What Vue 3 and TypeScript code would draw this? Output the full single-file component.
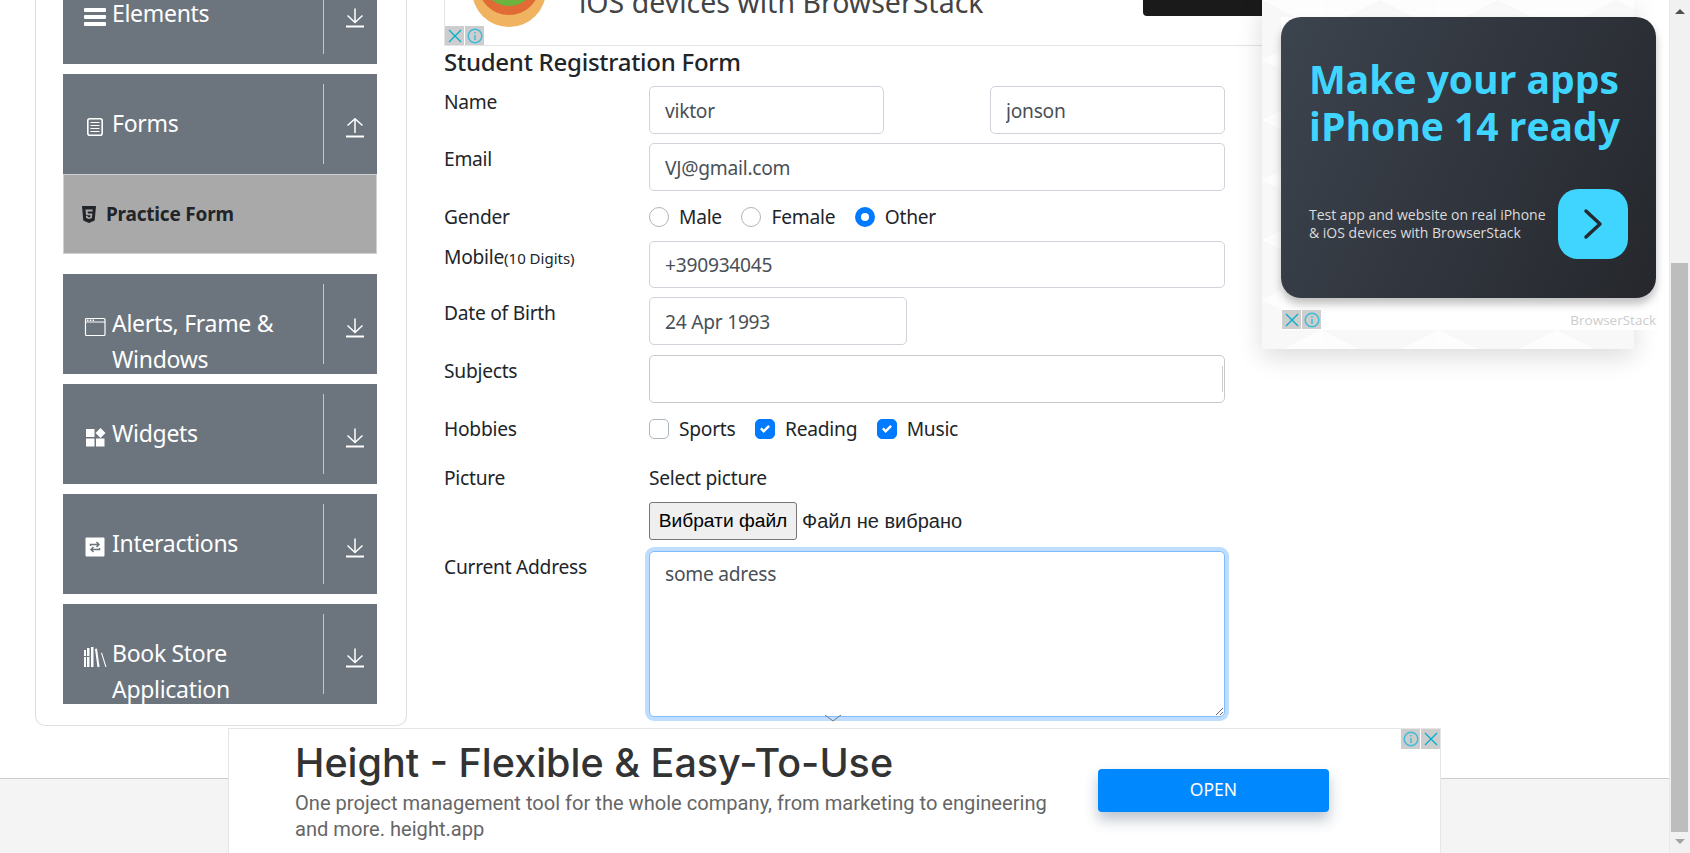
<script setup lang="ts">
interface MenuGroup {
  label: string
  icon: string
  open?: boolean
}

const groups: MenuGroup[] = [
  { label: 'Elements', icon: 'bars' },
  { label: 'Forms', icon: 'doc', open: true },
  { label: 'Alerts, Frame & Windows', icon: 'window' },
  { label: 'Widgets', icon: 'widgets' },
  { label: 'Interactions', icon: 'swap' },
  { label: 'Book Store Application', icon: 'books' }
]

const genders = [
  { label: 'Male', checked: false },
  { label: 'Female', checked: false },
  { label: 'Other', checked: true }
]

const hobbies = [
  { label: 'Sports', checked: false },
  { label: 'Reading', checked: true },
  { label: 'Music', checked: true }
]
</script>

<template>
  <div class="page">
    <div class="content">
      <div class="main">
        <aside class="side-card">
          <div class="menu">
            <template v-for="g in groups" :key="g.label">
              <div class="group-header">
                <div class="group-title">
                  <span class="group-icon">
                    <svg v-if="g.icon === 'bars'" width="24" height="20" viewBox="0 0 24 20" fill="#fff"><rect x="1" y="1" width="22" height="4" rx="1" /><rect x="1" y="8" width="22" height="4" rx="1" /><rect x="1" y="15" width="22" height="4" rx="1" /></svg>
                    <svg v-else-if="g.icon === 'doc'" width="24" height="20" viewBox="0 0 24 20" fill="none" stroke="#fff"><rect x="4.800" y="1.800" width="14.400" height="16.400" rx="2" stroke-width="1.600" /><path d="M7.500 5.500h9M7.500 8.500h9M7.500 11.500h9M7.500 14.500h9" /></svg>
                    <svg v-else-if="g.icon === 'window'" width="24" height="20" viewBox="0 0 24 20" fill="none" stroke="#fff"><rect x="2.500" y="1.500" width="19.500" height="17" rx="1" stroke-width="1.200" /><path d="M2.500 5h19.500" /><path d="M4 3.200h1.500M6.800 3.200h1.500M9.600 3.200h1.500" stroke-width="1.400" /></svg>
                    <svg v-else-if="g.icon === 'widgets'" width="24" height="20" viewBox="0 0 24 20" fill="#fff"><rect x="3" y="2" width="8.500" height="8" /><rect x="3" y="11.500" width="8.500" height="8" /><rect x="13" y="11.500" width="8.500" height="8" /><path d="M17.500 1l5 5-5 5-5-5z" /></svg>
                    <svg v-else-if="g.icon === 'swap'" width="24" height="20" viewBox="0 0 24 20"><rect x="2.500" y="0.500" width="19" height="19" rx="1" fill="#fff" /><path d="M7.500 9V7.500h8M13.500 5l2.500 2.500-2.500 2.500M16.500 11v1.500h-8M10.500 15L8 12.500 10.500 10" fill="none" stroke="#6c757d" stroke-width="1.500" /></svg>
                    <svg v-else width="24" height="20" viewBox="0 0 24 20" fill="#fff"><rect x="1" y="3" width="2" height="17" /><rect x="4" y="1" width="2.500" height="19" /><rect x="8" y="0" width="2.500" height="20" /><path d="M12 2l2-.4 2.500 18.400-2 .4z" /><path d="M18 6l1-.4 4.500 14.400-1 .4z" /><rect x="1" y="9" width="5.500" height="1" fill="#6c757d" /></svg>
                  </span>
                  <span class="group-label">{{ g.label }}</span>
                </div>
                <div class="group-toggle">
                  <svg width="20" height="20" viewBox="0 0 20 20" fill="none" stroke="#fff" stroke-width="1.500">
                    <path v-if="g.open" d="M10 15V1M2.500 7.500L10 .8l7.500 6.700" />
                    <path v-else d="M10 .5v14M2.500 7.500L10 14.500l7.500-7" />
                    <path d="M1 18.500h18" stroke-width="2" />
                  </svg>
                </div>
              </div>
              <div v-if="g.open" class="sub-item">
                <svg width="16" height="17" viewBox="0 0 16 17" fill="#212529"><path d="M1 0h14l-1.300 14.500L8 17l-5.700-2.500z" /><path d="M4.500 3.500h7.200l-.2 2H6.700l.1 2h4.500l-.4 4.500L8 13l-2.900-1-.2-2h1.800l.1 .9 1.200 .4 1.300-.4 .1-1.700H5z" fill="#a9a9a9" /></svg>
                <span>Practice Form</span>
              </div>
            </template>
          </div>
        </aside>

        <section class="form-col">
          <div class="top-ad">
            <svg class="top-logo" width="76" height="40" viewBox="0 0 76 40">
              <circle cx="38" cy="2" r="37" fill="#f0b35f" />
              <circle cx="38" cy="-4" r="31" fill="#e06b35" />
              <circle cx="38" cy="-9" r="27" fill="#6db33f" />
            </svg>
            <span class="top-text">iOS devices with BrowserStack</span>
            <span class="top-btn"></span>
            <div class="ad-marks">
              <span class="ad-mark"><svg width="14" height="14" viewBox="0 0 14 14" stroke="#00aecd" stroke-width="1.300"><path d="M1 1l12 12M13 1L1 13" /></svg></span>
              <span class="ad-mark"><svg width="16" height="16" viewBox="0 0 16 16" fill="none" stroke="#3fbcd8" stroke-width="1.500"><circle cx="8" cy="8" r="6.800" /><path d="M8 7v5M8 4v1.500" /></svg></span>
            </div>
          </div>

          <h5 class="form-title">Student Registration Form</h5>

          <form class="form" @submit.prevent>
            <div class="row row-name">
              <label class="label">Name</label>
              <div class="name-fields">
                <input class="control" value="viktor" placeholder="First Name" />
                <input class="control" value="jonson" placeholder="Last Name" />
              </div>
            </div>
            <div class="row row-email">
              <label class="label">Email</label>
              <input class="control" value="VJ@gmail.com" />
            </div>
            <div class="row row-gender">
              <label class="label">Gender</label>
              <div class="choices">
                <label v-for="o in genders" :key="o.label" class="choice">
                  <input type="radio" name="gender" class="radio" :checked="o.checked" />
                  <span>{{ o.label }}</span>
                </label>
              </div>
            </div>
            <div class="row row-mobile">
              <label class="label">Mobile<small class="hint">(10 Digits)</small></label>
              <input class="control" value="+390934045" />
            </div>
            <div class="row row-date">
              <label class="label">Date of Birth</label>
              <input class="control control-date" value="24 Apr 1993" />
            </div>
            <div class="row row-subjects">
              <label class="label">Subjects</label>
              <div class="control subjects"><span class="caret"></span></div>
            </div>
            <div class="row row-hobbies">
              <label class="label">Hobbies</label>
              <div class="choices">
                <label v-for="o in hobbies" :key="o.label" class="choice">
                  <input type="checkbox" class="check" :checked="o.checked" />
                  <span>{{ o.label }}</span>
                </label>
              </div>
            </div>
            <div class="row row-picture">
              <label class="label">Picture</label>
              <div class="picture">
                <div class="picture-label">Select picture</div>
                <div class="file">
                  <button type="button" class="file-btn">Вибрати файл</button>
                  <span>Файл не вибрано</span>
                </div>
              </div>
            </div>
            <div class="row">
              <label class="label">Current Address</label>
              <textarea class="control address">some adress</textarea>
            </div>
          </form>
        </section>

        <aside class="right-ad">
          <svg class="ad-pattern" width="372" height="349" viewBox="0 0 372 349">
            <defs>
              <pattern id="tri" width="118" height="60" patternUnits="userSpaceOnUse">
                <path d="M0 0l59 30L0 60zM118 0L59 30l59 30z" fill="#f8f8f8" />
                <path d="M59 0v60" stroke="#fff" />
              </pattern>
            </defs>
            <rect width="372" height="349" fill="url(#tri)" />
          </svg>
          <div class="right-inner">
            <div class="promo">
              <div class="promo-title">Make your apps<br />iPhone 14 ready</div>
              <div class="promo-bottom">
                <p class="promo-text">Test app and website on real iPhone<br />&amp; iOS devices with BrowserStack</p>
                <span class="promo-btn">
                  <svg width="24" height="32" viewBox="0 0 24 32" fill="none" stroke="#26292f" stroke-width="3.500" stroke-linecap="round" stroke-linejoin="round"><path d="M5 3l14 13L5 29" /></svg>
                </span>
              </div>
            </div>
            <div class="promo-foot">
              <div class="ad-marks ad-marks-static">
                <span class="ad-mark"><svg width="14" height="14" viewBox="0 0 14 14" stroke="#00aecd" stroke-width="1.300"><path d="M1 1l12 12M13 1L1 13" /></svg></span>
                <span class="ad-mark"><svg width="16" height="16" viewBox="0 0 16 16" fill="none" stroke="#3fbcd8" stroke-width="1.500"><circle cx="8" cy="8" r="6.800" /><path d="M8 7v5M8 4v1.500" /></svg></span>
              </div>
              <span class="promo-brand">BrowserStack</span>
            </div>
          </div>
        </aside>
      </div>
      <footer class="footer"></footer>
    </div>

    <div class="scrollbar">
      <span class="arrow-up"></span>
      <span class="thumb"></span>
      <span class="arrow-down"></span>
    </div>

    <!-- sticky bottom banner, sits over the page -->
    <svg class="fold-chevron" width="18" height="8" viewBox="0 0 18 8" fill="none" stroke="#777"><path d="M1 1l8 6 8-6" /></svg>
    <div class="bottom-ad">
      <div class="bottom-copy">
        <div class="bottom-title">Height - Flexible &amp; Easy-To-Use</div>
        <div class="bottom-desc">One project management tool for the whole company, from marketing to engineering and more. height.app</div>
      </div>
      <button type="button" class="open-btn">OPEN</button>
      <div class="ad-marks ad-marks-right">
        <span class="ad-mark"><svg width="16" height="16" viewBox="0 0 16 16" fill="none" stroke="#3fbcd8" stroke-width="1.500"><circle cx="8" cy="8" r="6.800" /><path d="M8 7v5M8 4v1.500" /></svg></span>
        <span class="ad-mark"><svg width="14" height="14" viewBox="0 0 14 14" stroke="#00aecd" stroke-width="1.300"><path d="M1 1l12 12M13 1L1 13" /></svg></span>
      </div>
    </div>
  </div>
</template>

<style>
html,
body {
  margin: 0;
  overflow: hidden;
  background: #fff;
}
</style>

<style scoped>
.page {
  position: relative;
  display: flex;
  width: 1690px;
  height: 853px;
  overflow: hidden;
  font-family: 'Noto Sans', 'Open Sans', sans-serif;
  font-size: 19.2px;
  letter-spacing: -0.25px;
  color: #212529;
}
.content {
  flex: 1;
  display: flex;
  flex-direction: column;
  min-width: 0;
}
.main {
  position: relative;
  height: 778px;
  display: flex;
  overflow: hidden;
  flex: none;
}
.footer {
  flex: 1;
  background: #f4f4f4;
  border-top: 1px solid #ccc;
}

/* sidebar */
.side-card {
  flex: none;
  box-sizing: border-box;
  width: 372px;
  height: 726px;
  margin-left: 35px;
  padding-left: 27px;
  border: 1px solid #dfdfdf;
  border-top: 0;
  border-radius: 0 0 10px 10px;
}
.menu {
  width: 314px;
  margin-top: -36px;
}
.group-header {
  display: flex;
  height: 100px;
  margin-bottom: 10px;
  overflow: hidden;
  background: #6c757d;
  color: #fff;
  font-size: 23px;
  letter-spacing: -0.3px;
  line-height: 36px;
}
.group-title {
  flex: 1;
  display: flex;
  padding: 31px 10px 0 20px;
}
.group-icon {
  flex: none;
  width: 29px;
  height: 36px;
  display: flex;
  align-items: center;
  padding-top: 7px;
  box-sizing: border-box;
}
.group-label {
  min-width: 0;
}
.group-toggle {
  flex: none;
  width: 54px;
  height: 80px;
  margin-top: 10px;
  border-left: 1px solid #c4c8cc;
  box-sizing: border-box;
  padding: 34px 0 0 21px;
}
.group-toggle svg {
  display: block;
}
.sub-item {
  display: flex;
  align-items: center;
  gap: 9px;
  box-sizing: border-box;
  height: 80px;
  margin: -10px 0 20px;
  padding-left: 17px;
  background: #a9a9a9;
  border: 1px solid #cdd0d4;
  font-weight: 700;
  font-size: 19px;
  letter-spacing: -0.2px;
}

/* form */
.form-col {
  flex: none;
  width: 781px;
  margin-left: 37px;
}
.top-ad {
  position: relative;
  width: 818px;
  height: 45px;
  overflow: hidden;
  border-bottom: 1px solid #e4e4e4;
  border-left: 1px solid #e4e4e4;
  box-sizing: content-box;
}
.top-logo {
  position: absolute;
  left: 26px;
  top: -12px;
}
.top-text {
  position: absolute;
  left: 134px;
  top: -16px;
  font-size: 28.500px;
  letter-spacing: 0;
  line-height: 36px;
  color: #444;
  white-space: nowrap;
}
.top-btn {
  position: absolute;
  left: 698px;
  top: -10px;
  width: 130px;
  height: 26px;
  background: #1a1a1a;
  border-radius: 4px;
}
.ad-marks {
  position: absolute;
  left: 0;
  bottom: 0;
  display: flex;
  gap: 1px;
}
.ad-mark {
  width: 19px;
  height: 19px;
  display: flex;
  align-items: center;
  justify-content: center;
  background: #cdcdcd;
}
.form-title {
  margin: 0;
  height: 40px;
  font-size: 24px;
  font-weight: 500;
  letter-spacing: -0.25px;
  line-height: 31px;
}
.row {
  display: flex;
}
.row-name {
  margin-bottom: 9px;
}
.row-email {
  margin-bottom: 10px;
}
.row-gender {
  margin-bottom: 8px;
}
.row-mobile {
  margin-bottom: 9px;
}
.row-date {
  margin-bottom: 10px;
}
.row-subjects {
  margin-bottom: 10px;
}
.row-hobbies {
  margin-bottom: 17px;
}
.row-picture {
  margin-bottom: 11px;
}
.label {
  flex: none;
  width: 205px;
  line-height: 32px;
}
.hint {
  font-size: 15px;
  letter-spacing: 0;
}
.name-fields {
  flex: 1;
  display: flex;
  justify-content: space-between;
}
.name-fields .control {
  flex: none;
  width: 235px;
}
.control {
  flex: 1;
  display: block;
  box-sizing: border-box;
  min-width: 0;
  height: 48px;
  padding: 7px 15px;
  border: 1px solid #ced4da;
  border-radius: 5px;
  outline: none;
  background: #fff;
  color: #495057;
  font: inherit;
  letter-spacing: inherit;
  line-height: 30px;
}
.control-date {
  flex: none;
  width: 258px;
}
.row-mobile .control {
  height: 47px;
}
.subjects {
  position: relative;
  border-color: #c9c9c9;
}
.caret {
  position: absolute;
  right: 1px;
  top: 10px;
  width: 1px;
  height: 26px;
  background: #ccc;
}
.choices {
  display: flex;
  gap: 19.500px;
  line-height: 32px;
}
.choice {
  display: flex;
  align-items: center;
  gap: 10px;
}
.radio,
.check {
  appearance: none;
  flex: none;
  box-sizing: border-box;
  width: 20px;
  height: 20px;
  margin: 0;
  background: #fff;
  border: 1px solid #adb5bd;
}
.radio {
  border-radius: 50%;
}
.check {
  border-radius: 5px;
}
.radio:checked {
  border: 6px solid #007bff;
}
.check:checked {
  border-color: #007bff;
  background: #007bff url("data:image/svg+xml,%3Csvg xmlns='http://www.w3.org/2000/svg' viewBox='0 0 8 8'%3E%3Cpath fill='%23fff' d='M6.564.75l-3.59 3.612-1.538-1.55L0 4.26l2.974 2.99L8 2.193z'/%3E%3C/svg%3E") center / 10px 10px no-repeat;
}
.picture {
  flex: 1;
}
.picture-label {
  line-height: 32px;
  margin-bottom: 8px;
}
.file {
  display: flex;
  align-items: center;
  gap: 5px;
  font-family: Arial, 'Liberation Sans', sans-serif;
  font-size: 20px;
  letter-spacing: 0;
}
.file-btn {
  box-sizing: border-box;
  width: 148px;
  height: 38px;
  padding: 0;
  border: 1px solid #767676;
  border-radius: 3px;
  background: #efefef;
  color: #000;
  font: inherit;
  font-size: 19.200px;
}
.address {
  height: 166px;
  margin-bottom: 0;
  border-color: #80bdff;
  box-shadow: 0 0 0 4px #bfdeff;
  resize: vertical;
}

/* right ad */
.right-ad {
  position: absolute;
  left: 1262px;
  top: 0;
  width: 372px;
  height: 349px;
  background: #fdfdfd;
  box-shadow: 0 8px 24px rgba(0, 0, 0, 0.14);
  letter-spacing: 0;
}
.ad-pattern {
  position: absolute;
  left: 0;
  top: 0;
}
.right-inner {
  position: absolute;
  left: 19px;
  top: 17px;
  width: 375px;
  height: 313px;
  background: #fff;
}
.promo {
  box-sizing: border-box;
  height: 281px;
  padding: 38px 28px 0 28px;
  border-radius: 20px;
  background: linear-gradient(115deg, #3c444e 0%, #30343c 55%, #25272c 100%);
  box-shadow: 0 6px 8px rgba(0, 0, 0, 0.25);
}
.promo-title {
  font-family: 'Open Sans', sans-serif;
  font-size: 39px;
  font-weight: 700;
  line-height: 47px;
  color: #3fd5ff;
  white-space: nowrap;
}
.promo-bottom {
  display: flex;
  align-items: center;
  justify-content: space-between;
  margin-top: 40px;
}
.promo-text {
  margin: 0;
  font-family: 'Open Sans', sans-serif;
  font-size: 14px;
  line-height: 18px;
  color: #dcdcdc;
  white-space: nowrap;
}
.promo-btn {
  flex: none;
  width: 70px;
  height: 70px;
  display: flex;
  align-items: center;
  justify-content: center;
  border-radius: 20px;
  background: #3fd5ff;
}
.promo-foot {
  position: relative;
  height: 32px;
}
.ad-marks-static {
  left: 1px;
  bottom: 1px;
}
.promo-brand {
  position: absolute;
  right: 0;
  top: 13px;
  font-family: 'Open Sans', sans-serif;
  font-size: 13.500px;
  line-height: 18px;
  color: #ccc;
}

/* scrollbar */
.scrollbar {
  position: relative;
  flex: none;
  width: 21px;
  background: #f1f1f1;
  border-left: 1px solid #e9e9e9;
  box-sizing: border-box;
}
.thumb {
  position: absolute;
  left: 1px;
  top: 263px;
  width: 17px;
  height: 569px;
  background: #bdbdbd;
}
.arrow-up,
.arrow-down {
  position: absolute;
  left: 5px;
  width: 0;
  height: 0;
  border-left: 5px solid transparent;
  border-right: 5px solid transparent;
}
.arrow-up {
  top: 9px;
  border-bottom: 5px solid #505050;
}
.arrow-down {
  top: 839px;
  border-top: 5px solid #a3a3a3;
}

/* bottom banner */
.fold-chevron {
  position: absolute;
  left: 824px;
  top: 714px;
}
.bottom-ad {
  position: absolute;
  left: 228px;
  top: 728px;
  box-sizing: border-box;
  width: 1213px;
  height: 125px;
  display: flex;
  background: #fff;
  border: 1px solid #e6e6e6;
  border-bottom: 0;
  letter-spacing: 0;
}
.bottom-copy {
  width: 760px;
  padding: 12px 0 0 66px;
}
.bottom-title {
  font-family: Inter, sans-serif;
  font-size: 39.500px;
  font-weight: 500;
  line-height: 44px;
  color: #333;
  white-space: nowrap;
}
.bottom-desc {
  margin-top: 5px;
  font-family: Roboto, sans-serif;
  font-size: 20.100px;
  line-height: 26px;
  color: #666;
}
.open-btn {
  position: absolute;
  left: 869px;
  top: 40px;
  width: 231px;
  height: 43px;
  padding: 0 0 3px;
  border: 0;
  border-radius: 4px;
  background: #0088ff;
  color: #fff;
  font-family: inherit;
  font-size: 17.500px;
  box-shadow: 0 8px 14px rgba(40, 60, 90, 0.3);
}
.ad-marks-right {
  left: auto;
  right: 0;
  top: 0;
  bottom: auto;
}
.ad-marks-right .ad-mark {
  height: 20px;
}
</style>
